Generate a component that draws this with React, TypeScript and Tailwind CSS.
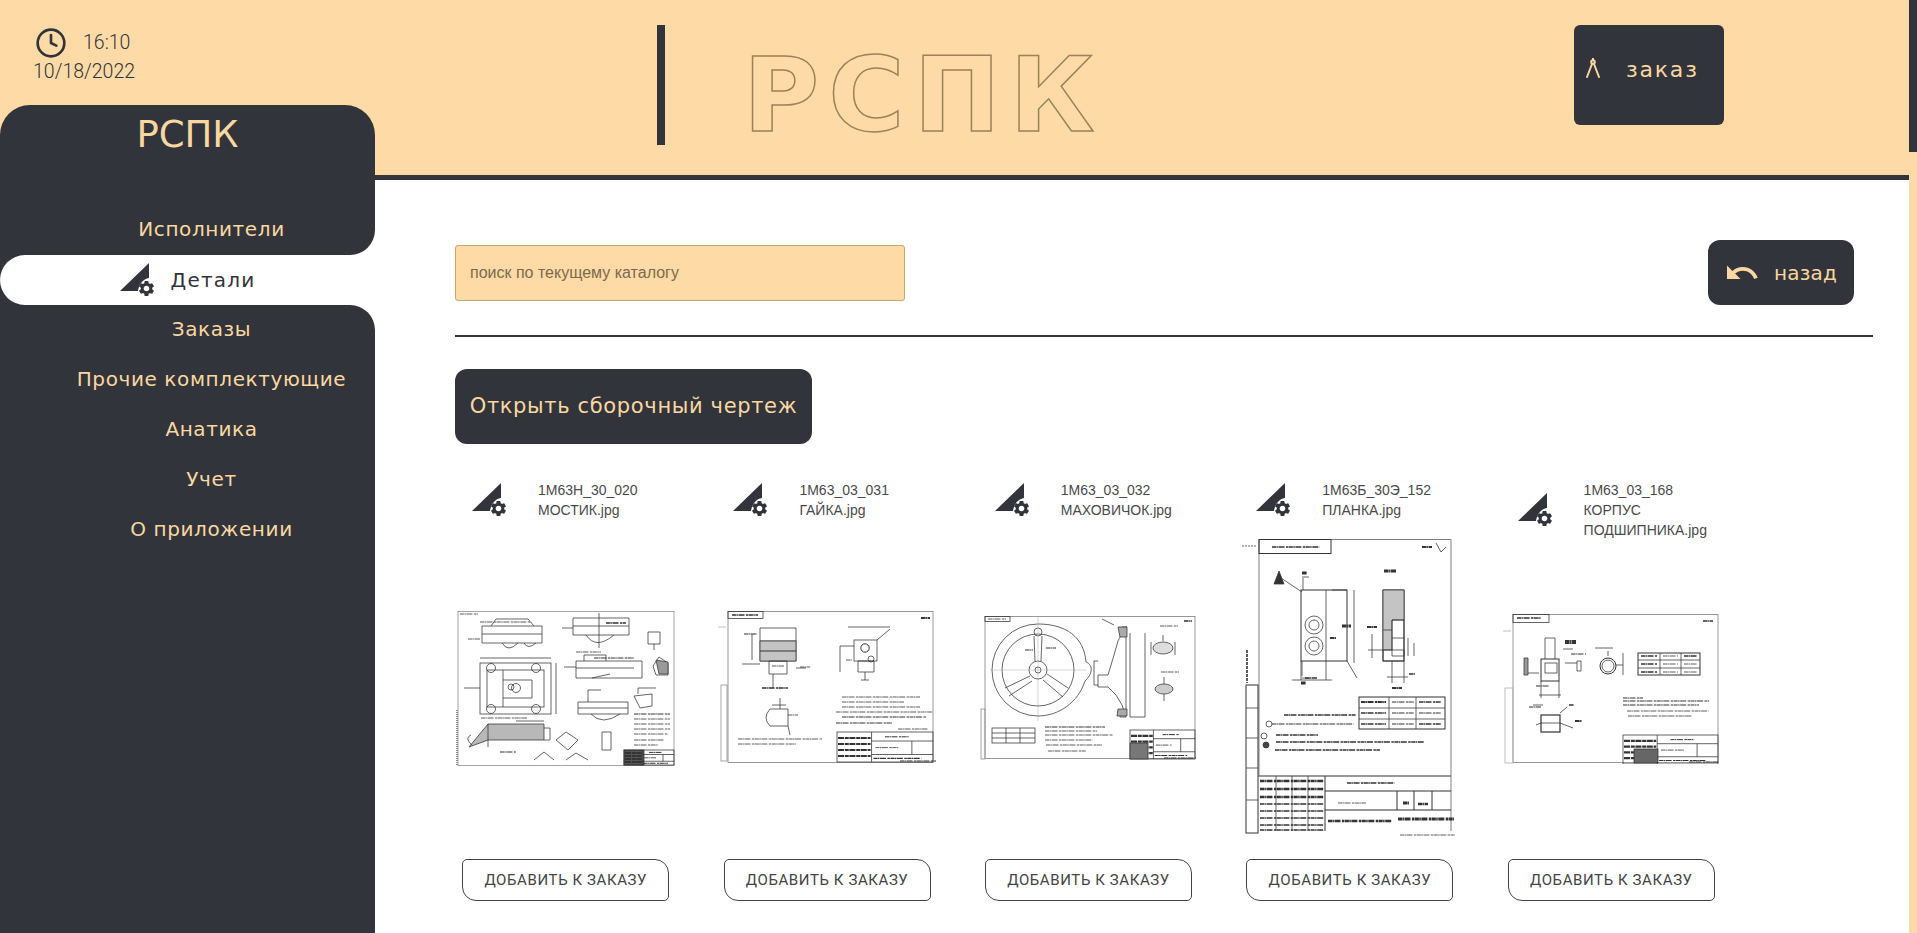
import { Clock } from "lucide-react"
import { MdSettings, MdUndo } from "react-icons/md"
import type { ReactNode } from "react"

const nav = "font-['DejaVu_Sans',sans-serif] text-[20px] tracking-[0.6px] text-[#fad7a0]"

function PartIcon({ className }: { className?: string }) {
  return (
    <div className={"relative h-[35px] w-[35px] shrink-0 " + (className ?? "")}>
      <svg viewBox="0 0 35 35" className="h-[35px] w-[35px]">
        <path d="M0 28 L29 0 L29 15 C23 16 19 21 18 28 Z" fill="#31343b" />
      </svg>
      <MdSettings className="absolute bottom-0 right-[-1px] h-[19px] w-[19px] text-[#31343b]" />
    </div>
  )
}

function CompassIcon() {
  return (
    <svg viewBox="0 0 14 20" className="h-5 w-[14px]" fill="none" stroke="#fad7a0" strokeWidth="2">
      <circle cx="7" cy="4" r="1.8" />
      <path d="M7 0 V2 M6 6 L1 19 M8 6 L13 19" strokeLinecap="round" />
    </svg>
  )
}

// line of handwriting on a drawing, drawn as a broken stroke
function Txt({ x, y, w, s = 0.8 }: { x: number; y: number; w: number; s?: number }) {
  return <line x1={x} y1={y} x2={x + w} y2={y} strokeWidth={s} strokeDasharray="4 .4 1.5 .6 6 1.4 2.5 .5" />
}

function Title({ x, y, w, h }: { x: number; y: number; w: number; h: number }) {
  const rows = [0.2, 0.4, 0.6, 0.8]
  return (
    <g>
      <rect x={x} y={y} width={w} height={h} />
      <line x1={x + w * 0.36} y1={y} x2={x + w * 0.36} y2={y + h} />
      <line x1={x + w * 0.36} y1={y + h * 0.3} x2={x + w} y2={y + h * 0.3} />
      <line x1={x + w * 0.36} y1={y + h * 0.75} x2={x + w} y2={y + h * 0.75} />
      <line x1={x + w * 0.78} y1={y + h * 0.3} x2={x + w * 0.78} y2={y + h * 0.75} />
      {rows.map((r) => (
        <line key={r} x1={x + 1} y1={y + h * r} x2={x + w * 0.35} y2={y + h * r} strokeWidth={2.2} strokeDasharray="6 .8 4 .6" />
      ))}
      <Txt x={x + w * 0.5} y={y + h * 0.16} w={w * 0.25} s={1} />
      <Txt x={x + w * 0.4} y={y + h * 0.52} w={w * 0.24} />
      <Txt x={x + w * 0.38} y={y + h * 0.88} w={w * 0.5} s={1.1} />
    </g>
  )
}

function Sheet({ w, h, children }: { w: number; h: number; children: ReactNode }) {
  return (
    <svg viewBox={`0 0 ${w} ${h}`} width={w} height={h} fill="none" stroke="#333" strokeWidth=".75" className="blur-[0.3px]">
      {children}
    </svg>
  )
}

function Drawing1() {
  return (
    <Sheet w={219} h={157}>
      <rect x="2" y="1.5" width="216" height="154" stroke="#888" />
      <line x1="1" y1="100" x2="1" y2="155" strokeWidth="2" strokeDasharray="1 1" stroke="#888" />
      <Txt x={4} y={4} w={18} />
      <path d="M26 16 H86 V33 H26 Z M26 24 H86 M35 16 L40 9 H72 L78 16 M46 33 Q52 43 62 33 M68 33 Q72 40 80 33" />
      <Txt x={24} y={12} w={50} />
      <Txt x={12} y={29} w={12} />
      <rect x="24" y="53" width="71" height="51" />
      <rect x="31" y="60" width="57" height="37" />
      <path d="M47 60 V97 M47 70 H76 V88 H47 M8 78 H24 M24 48 H95 M100 53 V104" />
      <circle cx="35" cy="58" r="4.5" /><circle cx="80" cy="58" r="4.5" />
      <circle cx="35" cy="99" r="4.5" /><circle cx="80" cy="99" r="4.5" />
      <circle cx="55" cy="77" r="3" /><circle cx="60" cy="78" r="4.5" />
      <path d="M117 8 H173 V25 H117 Z M117 16 H173 M130 25 Q140 40 158 25 M143 3 V38 M106 18 H117" />
      <Txt x={150} y={13} w={20} s={1.4} />
      <Txt x={120} y={42} w={25} />
      <path d="M120 51 H186 V68 H120 Z M120 58 H178 M128 51 V45 H150 V51 M136 68 L154 64 M108 57 H120" />
      <Txt x={138} y={48} w={40} s={1.2} />
      <path d="M192 22 H204 V34 H192 Z M198 34 V40 M197 56 L203 47 L212 53 V65 H200 Z" />
      <path d="M200 50 L212 52 V64 H203 Z" fill="#999" />
      <path d="M122 92 H172 V104 H122 Z M122 98 H172 M132 92 V80 H145 M135 104 Q146 116 164 104" />
      <path d="M178 86 L196 84 V96 L184 98 Z M182 84 V78 H200" />
      <path d="M13 137 L32 114 H88 V130 H32 Z" fill="#b8b8b8" />
      <path d="M15 125 Q8 128 16 135 M32 114 V137 M60 111 H88 M88 118 H94 V130 H88" />
      <Txt x={25} y={108} w={46} />
      <Txt x={44} y={142} w={16} s={1.2} />
      <path d="M100 130 L110 122 L122 130 L112 140 Z M146 122 V140 H155 V122 Z" />
      <path d="M78 150 L88 142 L98 150 M110 150 L120 143 L132 150" />
      <Txt x={178} y={104} w={36} s={1} />
      <Txt x={178} y={109} w={36} />
      <Txt x={178} y={114} w={36} />
      <Txt x={178} y={119} w={36} />
      <Txt x={178} y={124} w={34} />
      <Txt x={178} y={130} w={30} />
      <Txt x={178} y={135} w={24} />
      <rect x="168" y="140" width="20" height="15" fill="#555" />
      <Title x={168} y={140} w={50} h={15} />
    </Sheet>
  )
}

function Drawing2() {
  return (
    <Sheet w={219} h={156}>
      <rect x="10" y="1.5" width="205" height="151" stroke="#777" />
      <rect x="10" y="1.5" width="35" height="7" />
      <Txt x={14} y={5} w={26} s={1.5} />
      <line x1="0" y1="17" x2="8" y2="17" stroke="#aaa" />
      <rect x="3" y="75" width="6" height="76" stroke="#888" />
      <path d="M42 18 H78 V31 M42 18 V31 M42 31 H78 V51 H42 Z" />
      <rect x="42" y="31" width="36" height="20" fill="#c4c4c4" />
      <line x1="42" y1="41" x2="78" y2="41" strokeWidth="1" />
      <path d="M51 51 H69 V64 H51 Z M55 64 V78 M34 24 V50 M24 54 H42 M78 58 H88" />
      <Txt x={26} y={24} w={14} s={1.1} />
      <Txt x={82} y={57} w={10} />
      <Txt x={54} y={56} w={12} />
      <Txt x={44} y={78} w={26} s={1.6} />
      <rect x="136" y="30" width="23" height="21" />
      <circle cx="147" cy="38" r="4.2" strokeWidth="1" />
      <circle cx="153" cy="49" r="3" />
      <path d="M140 51 H156 V62 H140 Z M147 62 V70 M143 70 H151 M122 36 H136 M122 36 V62 M159 30 L172 19 M130 17 H172" />
      <Txt x={128} y={50} w={6} />
      <Txt x={203} y={8} w={9} s={2} />
      <path d="M52 99 H70 V116 H52 M52 99 Q44 108 52 116 M62 88 V99 M70 116 L72 125" />
      <line x1="54" y1="95" x2="68" y2="95" />
      <Txt x={70} y={105} w={10} />
      <Txt x={124} y={87} w={78} />
      <Txt x={124} y={92} w={62} />
      <Txt x={124} y={97} w={78} />
      <Txt x={118} y={102} w={96} />
      <Txt x={124} y={107} w={84} s={1.2} />
      <Txt x={118} y={113} w={56} s={1.1} />
      <Txt x={180} y={119} w={30} />
      <Txt x={20} y={129} w={84} />
      <Txt x={20} y={134} w={58} />
      <Title x={119} y={122} w={96} h={30} />
      <Txt x={182} y={151} w={36} s={1.2} />
    </Sheet>
  )
}

function Drawing3() {
  return (
    <Sheet w={217} h={147}>
      <rect x="5" y="1.5" width="210" height="142" stroke="#777" />
      <rect x="5" y="1.5" width="25" height="5" />
      <Txt x={8} y={4} w={18} />
      <rect x="1" y="94" width="4" height="50" stroke="#888" />
      <path d="M58 9 C86 9 104 22 106 47 C114 50 112 60 105 66 C98 88 78 101 58 101 A46 46 0 0 1 58 9 Z" />
      <circle cx="58" cy="55" r="36" />
      <circle cx="58" cy="55" r="9" />
      <circle cx="58" cy="55" r="3" />
      <path d="M54 21 L55 46 M62 21 L61 46 M50 61 L25 73 M52 66 L29 81 M67 59 L88 73 M63 65 L83 82" />
      <circle cx="58" cy="17" r="4" />
      <line x1="10" y1="55" x2="106" y2="55" stroke="#999" strokeWidth=".4" />
      <line x1="58" y1="2" x2="58" y2="106" stroke="#999" strokeWidth=".4" />
      <Txt x={66} y={33} w={10} s={1.1} />
      <Txt x={45} y={35} w={8} s={1.1} />
      <path d="M142 12 H147 C146 12 147 8 138 26 L134 40 L128 60 H118 V72 H128 L136 80 L142 90 L146 102 H140 V98 H146 V12" />
      <path d="M138 12 H147 V22 H140 Z M138 94 H147 V101 H137 Z" fill="#aaa" />
      <path d="M118 46 H114 V70 H118 M150 18 V102 H165 M165 18 V102 M122 4 L134 10" />
      <ellipse cx="183" cy="33" rx="10" ry="6" fill="#ddd" />
      <ellipse cx="184" cy="74" rx="9" ry="5" fill="#ccc" />
      <path d="M171 27 V40 M195 27 V40 M183 20 V26 M184 62 V69 M184 79 V86" />
      <Txt x={180} y={11} w={18} />
      <Txt x={181} y={57} w={18} />
      <Txt x={204} y={6} w={8} s={1.5} />
      <rect x="12" y="113" width="43" height="15" />
      <path d="M12 118 H55 M12 123 H55 M26 113 V128 M40 113 V128" />
      <Txt x={65} y={112} w={60} s={1} />
      <Txt x={65} y={116} w={52} />
      <Txt x={65} y={120} w={68} />
      <Txt x={65} y={125} w={48} />
      <Txt x={66} y={130} w={56} />
      <Txt x={68} y={136} w={38} />
      <Title x={150} y={115} w={65} h={29} />
      <rect x="150" y="128" width="18" height="16" fill="#777" />
      <Txt x={184} y={143} w={32} s={1.2} />
    </Sheet>
  )
}

function Drawing4() {
  return (
    <Sheet w={215} h={300}>
      <path d="M17 1.5 H209 M17 1.5 V237 M209 1.5 V293" stroke="#555" />
      <line x1="0" y1="8" x2="15" y2="8" strokeDasharray="2 1" />
      <rect x="17" y="1.5" width="72" height="14" strokeWidth="1" />
      <Txt x={30} y={9} w={48} s={1.6} />
      <Txt x={180} y={9} w={10} s={2.2} />
      <path d="M194 5 L199 14 L204 9" />
      <rect x="59" y="52" width="46" height="71" strokeWidth="1" />
      <line x1="84" y1="52" x2="84" y2="123" />
      <circle cx="72" cy="87" r="9" /><circle cx="72" cy="87" r="5" />
      <circle cx="72" cy="108" r="9" /><circle cx="72" cy="108" r="5" />
      <path d="M61 52 V40 M60 39 H67 M60 123 V138 M68 140 H60 M105 52 L90 52 M112 52 V125 M105 123 L115 140 M59 123 V142 M84 123 V142 M50 142 H90" />
      <path d="M60 54 L36 38" />
      <path d="M32 46 L37 33 L42 46 Z" fill="#333" />
      <Txt x={60} y={35} w={5} s={3} />
      <Txt x={59} y={145} w={5} s={3} />
      <Txt x={63} y={140} w={12} s={1.4} />
      <Txt x={100} y={88} w={9} s={3} />
      <Txt x={88} y={100} w={6} s={2} />
      <Txt x={142} y={33} w={12} s={3} />
      <rect x="141" y="52" width="21" height="71" strokeWidth="1" />
      <path d="M141 52 H162 V82 H150 V112 H141 Z" fill="#c4c4c4" />
      <path d="M141 92 H150 M150 82 H162 V100 H150 Z M150 100 V118 H162 V100 M141 112 H162 V123 H141 Z" />
      <path d="M150 123 V145 M162 123 V145 M145 139 H166 M130 96 V120 M126 112 H141 M166 100 V118 M172 105 V118" />
      <Txt x={150} y={150} w={10} s={2} />
      <Txt x={167} y={136} w={6} s={1.4} />
      <Txt x={125} y={89} w={10} s={2} />
      <rect x="117" y="159" width="86" height="32" strokeWidth="1" />
      <path d="M117 170 H203 M117 181 H203 M147 159 V191 M174 159 V191" />
      <Txt x={119} y={164} w={25} s={1.8} /><Txt x={150} y={164} w={22} s={1.2} /><Txt x={177} y={164} w={22} s={1.4} />
      <Txt x={119} y={175} w={25} s={1.4} /><Txt x={150} y={175} w={22} s={1.2} /><Txt x={177} y={175} w={22} s={1.2} />
      <Txt x={119} y={186} w={25} s={1.4} /><Txt x={150} y={186} w={22} s={1.2} /><Txt x={177} y={186} w={22} s={1.4} />
      <Txt x={42} y={177} w={72} s={1.4} />
      <Txt x={30} y={186} w={82} s={1.2} />
      <Txt x={34} y={197} w={42} s={1.4} />
      <Txt x={34} y={204} w={148} s={1.3} />
      <Txt x={33} y={212} w={105} s={1.3} />
      <circle cx="27" cy="186" r="3" /><circle cx="22" cy="198" r="3" /><circle cx="24" cy="207" r="3" fill="#444" />
      <line x1="5" y1="112" x2="5" y2="145" strokeWidth="1.6" strokeDasharray="3 1" />
      <rect x="4" y="147" width="12" height="148" strokeWidth="1" />
      <path d="M4 170 H16 M4 200 H16 M4 230 H16 M4 262 H16" />
      <path d="M16 238 H209 M83 238 V293 M83 253 H209 M155 253 V272 M172 253 V272 M190 253 V272 M83 272 H209" strokeWidth="1" />
      <Txt x={105} y={245} w={48} s={1.3} />
      <Txt x={96} y={265} w={28} />
      <Txt x={161} y={265} w={6} s={3} /><Txt x={176} y={266} w={10} s={2.5} />
      <Txt x={86} y={283} w={64} s={2.6} />
      <Txt x={156} y={281} w={56} s={3.2} />
      <Txt x={158} y={297} w={55} />
      {[243, 251, 259, 266, 273, 280, 287, 292].map((y) => (
        <Txt key={y} x={18} y={y} w={64} s={y < 260 ? 2.5 : 1.6} />
      ))}
      <path d="M34 238 V293 M50 238 V293 M66 238 V293" />
    </Sheet>
  )
}

function Drawing5() {
  return (
    <Sheet w={217} h={151}>
      <rect x="10" y="1.5" width="205" height="148" stroke="#777" />
      <rect x="10" y="1.5" width="36" height="8" />
      <Txt x={14} y={5} w={24} s={1.5} />
      <rect x="2" y="75" width="8" height="75" stroke="#aaa" />
      <line x1="0" y1="18" x2="8" y2="18" stroke="#aaa" />
      <Txt x={200} y={8} w={10} s={1.5} />
      <rect x="38" y="46" width="18" height="22" strokeWidth="1" />
      <rect x="42" y="50" width="12" height="10" />
      <path d="M42 46 V25 H52 V46 M38 68 V85 M56 68 V85 M36 82 H58 M24 60 H36 M60 36 H70" />
      <path d="M21 45 H25 V62 H21 Z" fill="#999" />
      <Txt x={62} y={29} w={11} s={4} />
      <Txt x={68} y={41} w={15} s={1.2} />
      <path d="M74 48 H78 V58 H74 Z M62 50 H74" />
      <Txt x={33} y={73} w={14} s={1.1} />
      <circle cx="105" cy="53" r="8" strokeWidth="1" />
      <circle cx="105" cy="53" r="6" />
      <path d="M105 38 V43 M92 35 H110 M113 52 H120 M120 40 V62" />
      <rect x="135" y="40" width="62" height="22" strokeWidth="1" />
      <path d="M135 47 H197 M135 55 H197 M157 40 V62 M178 40 V62" />
      <Txt x={138} y={43} w={16} s={1.3} /><Txt x={160} y={43} w={15} /><Txt x={181} y={43} w={13} s={1.3} />
      <Txt x={138} y={51} w={16} s={1.3} /><Txt x={160} y={51} w={15} /><Txt x={181} y={51} w={13} />
      <Txt x={138} y={59} w={16} s={1.3} /><Txt x={160} y={59} w={15} /><Txt x={181} y={59} w={13} />
      <rect x="38" y="102" width="19" height="17" strokeWidth="1.2" />
      <path d="M38 110 H57 M38 110 L33 112 M57 110 L70 115 M30 92 H40 M57 100 L64 94" />
      <Txt x={26} y={94} w={12} s={1.2} />
      <Txt x={66} y={92} w={5} s={1.4} />
      <Txt x={72} y={108} w={7} s={2} />
      <Txt x={120} y={85} w={20} s={1} />
      <Txt x={120} y={88} w={86} s={1.1} />
      <Txt x={120} y={92} w={76} s={1} />
      <Txt x={124} y={98} w={82} />
      <Txt x={125} y={103} w={64} />
      <Title x={120} y={122} w={95} h={29} />
      <rect x="131" y="136" width="24" height="14" fill="#666" />
      <Txt x={186} y={149} w={30} s={1.2} />
    </Sheet>
  )
}

const parts = [
  { name: "1М63Н_30_020 МОСТИК.jpg", drawing: <Drawing1 /> },
  { name: "1М63_03_031 ГАЙКА.jpg", drawing: <Drawing2 /> },
  { name: "1М63_03_032 МАХОВИЧОК.jpg", drawing: <Drawing3 /> },
  { name: "1М63Б_30Э_152 ПЛАНКА.jpg", drawing: <Drawing4 /> },
  { name: "1М63_03_168 КОРПУС ПОДШИПНИКА.jpg", drawing: <Drawing5 /> },
]

function PartCard({ name, drawing }: { name: string; drawing: ReactNode }) {
  return (
    <div className="flex flex-col items-center">
      <div className="h-[58px] w-full pl-[37px]">
        <div className="flex items-center">
          <PartIcon />
          <p className="ml-[31px] w-[150px] font-['Liberation_Sans',sans-serif] text-[14px] leading-5 text-[#4a4a4a]">{name}</p>
        </div>
      </div>
      <div className="flex h-[300px] items-center justify-center">{drawing}</div>
      <button className="mt-[21px] h-[42px] w-[207px] rounded-tl-[5px] rounded-tr-[14px] rounded-br-[5px] rounded-bl-[14px] border border-[#444] font-['Roboto',sans-serif] text-[15px] tracking-[0.6px] text-[#444]">
        ДОБАВИТЬ К ЗАКАЗУ
      </button>
    </div>
  )
}

export default function App() {
  return (
    <div className="flex h-screen overflow-hidden bg-white">
      <div className="min-w-0 flex-1">
        <header className="flex h-[180px] border-b-[5px] border-[#31343b] bg-[#fedba6]">
          <div className="w-[657px] shrink-0 pt-[27px] pl-[33px] font-['Roboto',sans-serif] text-[19.5px] leading-7 font-light text-[#31343b]">
            <div className="flex items-center">
              <Clock className="ml-[2px] h-[32px] w-[32px]" strokeWidth={2} />
              <span className="ml-[16px]">16:10</span>
            </div>
            <div className="-mt-[1px]">10/18/2022</div>
          </div>
          <div className="mt-[25px] h-[120px] w-2 shrink-0 bg-[#31343b]" />
          <div className="mt-[40px] ml-[78px] w-[831px] shrink-0 font-['DejaVu_Sans',sans-serif] text-[104px] leading-[110px] font-bold tracking-[9px] text-transparent [-webkit-text-stroke:1.5px_#9c8258]">
            РСПК
          </div>
          <button className="mt-[25px] flex h-[100px] w-[150px] shrink-0 items-start rounded-md bg-[#31343b] pt-[33px] pl-3">
            <CompassIcon />
            <span className="-mt-[5px] ml-[26px] font-['DejaVu_Sans',sans-serif] text-[22px] tracking-[1.8px] text-[#fad7a0]">заказ</span>
          </button>
        </header>

        <div className="flex">
          <aside className="relative z-10 -mt-[75px] flex h-[828px] w-[375px] shrink-0 flex-col">
            <div className="rounded-t-[30px] rounded-br-[25px] bg-[#31343b]">
              <div className="pt-[5px] text-center font-['DejaVu_Sans',sans-serif] text-[37px] leading-[50px] text-[#fad7a0]">РСПК</div>
              <div className={"mt-[45px] h-[50px] pl-[48px] text-center leading-[48px] " + nav}>Исполнители</div>
            </div>
            <div className="bg-[#31343b]">
              <div className="flex h-[50px] items-center justify-center rounded-l-[25px] bg-white">
                <PartIcon className="mr-[16px]" />
                <span className="font-['DejaVu_Sans',sans-serif] text-[20px] tracking-[1.2px] text-[#31343b]">Детали</span>
              </div>
            </div>
            <nav className="flex-1 rounded-tr-[25px] bg-[#31343b] pl-[48px] text-center">
              {["Заказы", "Прочие комплектующие", "Анатика", "Учет", "О приложении"].map((item) => (
                <div key={item} className={"h-[50px] leading-[48px] " + nav}>
                  {item}
                </div>
              ))}
            </nav>
          </aside>

          <main className="min-w-0 flex-1 pr-9 pl-20">
            <div className="flex items-center justify-between pt-[60px] pr-[19px]">
              <input
                placeholder="поиск по текущему каталогу"
                className="h-[56px] w-[450px] rounded-[3px] border border-[#c9a76f] bg-[#fedba6] px-[14px] font-['Liberation_Sans',sans-serif] text-[16px] placeholder:text-[#7b6a4e]"
              />
              <button className="flex h-[65px] w-[146px] items-center rounded-xl bg-[#31343b] pl-[16px]">
                <MdUndo className="h-[36px] w-[36px] text-[#fad7a0]" />
                <span className="ml-[14px] font-['DejaVu_Sans',sans-serif] text-[20px] tracking-[0.2px] text-[#fad7a0]">назад</span>
              </button>
            </div>
            <hr className="mt-[30px] border-t-2 border-[#31343b]" />
            <button className="mt-8 h-[75px] w-[357px] rounded-xl bg-[#31343b] text-center font-['DejaVu_Sans',sans-serif] text-[21px] tracking-[0.65px] text-[#fad7a0]">
              Открыть сборочный чертеж
            </button>
            <div className="mt-[36px] -ml-5 grid w-[1307px] grid-cols-5">
              {parts.map((part) => (
                <PartCard key={part.name} name={part.name} drawing={part.drawing} />
              ))}
            </div>
          </main>
        </div>
      </div>
      <div className="w-2 shrink-0 bg-[#fedba6]">
        <div className="h-[152px] bg-[#31343b]" />
      </div>
    </div>
  )
}
